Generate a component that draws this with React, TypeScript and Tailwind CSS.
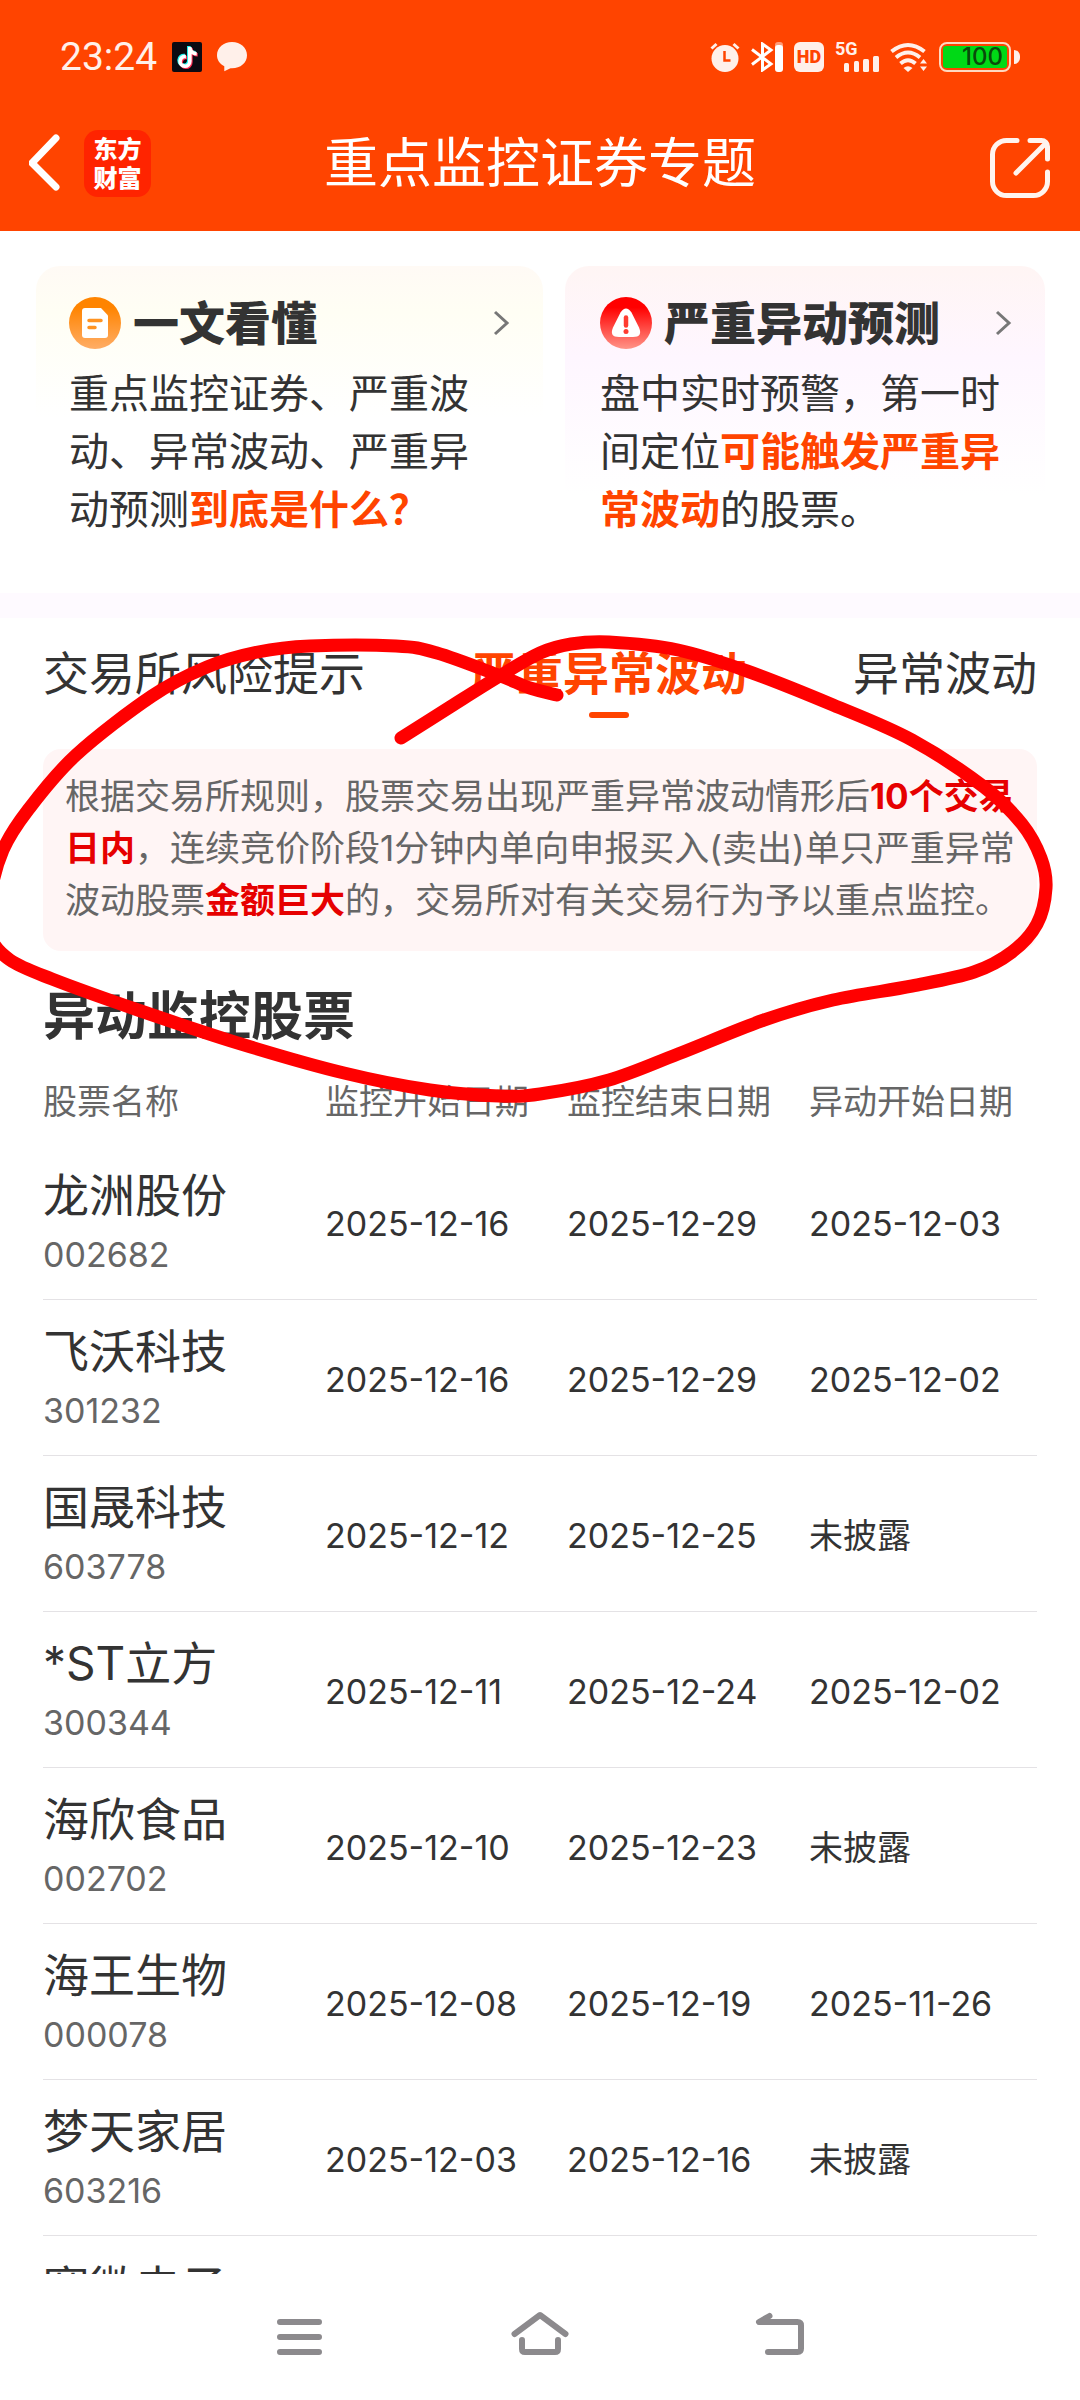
import { FaTiktok } from "react-icons/fa";

interface Stock {
  name: string;
  code: string;
  start: string;
  end: string;
  moved: string;
}

const stocks: Stock[] = [
  { name: "龙洲股份", code: "002682", start: "2025-12-16", end: "2025-12-29", moved: "2025-12-03" },
  { name: "飞沃科技", code: "301232", start: "2025-12-16", end: "2025-12-29", moved: "2025-12-02" },
  { name: "国晟科技", code: "603778", start: "2025-12-12", end: "2025-12-25", moved: "未披露" },
  { name: "*ST立方", code: "300344", start: "2025-12-11", end: "2025-12-24", moved: "2025-12-02" },
  { name: "海欣食品", code: "002702", start: "2025-12-10", end: "2025-12-23", moved: "未披露" },
  { name: "海王生物", code: "000078", start: "2025-12-08", end: "2025-12-19", moved: "2025-11-26" },
  { name: "梦天家居", code: "603216", start: "2025-12-03", end: "2025-12-16", moved: "未披露" },
  { name: "赛微电子", code: "", start: "", end: "", moved: "" },
];

const tabs = ["交易所风险提示", "严重异常波动", "异常波动"];
const activeTab = "严重异常波动";

// Points of the hand-drawn marker line
const marker: [number, number][] = [
  [401, 120], [450, 89], [498, 59], [540, 35], [571, 26], [609, 24], [678, 32], [747, 53],
  [833, 87], [912, 122], [984, 169], [1022, 206], [1041, 240], [1046, 270], [1037, 306],
  [1012, 334], [974, 354], [912, 368], [833, 382], [764, 402], [678, 436], [609, 462],
  [540, 476], [499, 478], [430, 472], [344, 455], [241, 426], [138, 392], [52, 361],
  [10, 342], [-10, 318], [-10, 280], [3, 232], [28, 192], [76, 137], [152, 78], [207, 49],
  [258, 34], [310, 28], [396, 28], [437, 35], [498, 57], [530, 70], [557, 77],
];

function smoothPath(pts: [number, number][]) {
  let d = `M${pts[0][0]} ${pts[0][1]}`;
  for (let i = 0; i < pts.length - 1; i++) {
    const a = pts[i - 1] ?? pts[i];
    const b = pts[i];
    const c = pts[i + 1];
    const e = pts[i + 2] ?? c;
    d += ` C${b[0] + (c[0] - a[0]) / 6} ${b[1] + (c[1] - a[1]) / 6} ${c[0] - (e[0] - b[0]) / 6} ${c[1] - (e[1] - b[1]) / 6} ${c[0]} ${c[1]}`;
  }
  return d;
}

function StatusBar() {
  return (
    <div className="flex h-[114px] items-center justify-between pr-[60px] pl-[60px] text-[#fff0ea]">
      <div className="flex items-center gap-[15px]">
        <span className="font-[Roboto,sans-serif] text-[39px] leading-[40px]">23:24</span>
        <span className="relative h-[30px] w-[30px] rounded-[2px] bg-[#0b0a12]">
          <FaTiktok className="absolute top-[4px] left-[4px] h-[21px] w-[21px] text-[#25f4ee]" />
          <FaTiktok className="absolute top-[6px] left-[6px] h-[21px] w-[21px] text-[#fe2c55]" />
          <FaTiktok className="absolute top-[5px] left-[5px] h-[21px] w-[21px] text-white" />
        </span>
        <svg className="h-[30px] w-[30px]" viewBox="0 0 30 30" fill="currentColor">
          <path d="M15 0C6.500 0 0 5.600 0 13.200c0 4.800 2.800 8.700 7.300 11v5l6.200-3 1.500.1c8.500 0 15-5.600 15-13.100S23.500 0 15 0z" />
        </svg>
      </div>

      <div className="flex items-center gap-[11px]">
        <svg className="h-[30px] w-[30px]" viewBox="0 0 30 30" fill="none">
          <circle cx="15" cy="16.500" r="13.500" fill="currentColor" />
          <path d="M1.500 6.500 6.500 2M23.500 2l5 4.500" stroke="currentColor" strokeWidth="3" />
          <path d="M14.500 9v9.500h6" stroke="#ff4400" strokeWidth="2.500" />
        </svg>
        <svg className="h-[30px] w-[32px]" viewBox="0 0 32 30" fill="none">
          <path d="M1 7.500 20 22l-8.500 6V2L20 8 1 22.500" stroke="white" strokeWidth="3" />
          <rect x="24" y="0" width="8" height="8" rx="3" fill="#ff9c78" />
          <rect x="24" y="3" width="8" height="27" rx="3" fill="white" />
        </svg>
        <span className="flex h-[30px] w-[30px] items-center justify-center rounded-[6px] bg-[#fff0ea] font-[Roboto,sans-serif] text-[18px] leading-none font-black text-[#ff4400]">
          HD
        </span>
        <span className="relative h-[30px] w-[44px]">
          <span className="block font-[Roboto,sans-serif] text-[18px] leading-[14px] font-bold">5G</span>
          <svg className="absolute inset-0" viewBox="0 0 44 30" fill="currentColor">
            <rect x="9" y="21" width="5" height="9" rx="1.500" />
            <rect x="19" y="19" width="5" height="11" rx="1.500" />
            <rect x="28" y="17" width="6" height="13" rx="1.500" />
            <rect x="38" y="14" width="6" height="16" rx="1.500" />
          </svg>
        </span>
        <svg className="h-[30px] w-[38px]" viewBox="0 0 38 30" fill="none">
          <path d="M1.500 9.500q16.500-13 33 0M6 15.500q12-10 24 0M10.500 21.500q7.500-6.500 15 0" stroke="currentColor" strokeWidth="4" />
          <path d="M13.500 26q4.500-3.500 9 0L18 30zM30 21.500l3.500-4.500 3.500 4.500zM30 24.500h7L33.500 29z" fill="currentColor" />
        </svg>
        <div className="flex items-center gap-[3px]">
          <div className="flex h-[30px] w-[72px] rounded-[8px] border-2 border-[#ffd9c0] p-[2px]">
            <span className="flex flex-1 items-center justify-end rounded-[3px] bg-[#00d916] pr-[4px] text-[24px] leading-none font-medium text-[#0a4a0a]">
              100
            </span>
          </div>
          <span className="h-[14px] w-[6px] rounded-r-full bg-[#fff0ea]" />
        </div>
      </div>
    </div>
  );
}

function Header() {
  return (
    <header className="bg-[#ff4400] pb-[18px] text-white">
      <StatusBar />
      <div className="grid h-[99px] grid-cols-[1fr_auto_1fr] items-center px-[29px]">
        <div className="flex items-center gap-[21px]">
          <button aria-label="返回">
            <svg className="h-[60px] w-[34px]" viewBox="0 0 34 60" fill="none">
              <path d="M27 4 3 29l24 24" stroke="white" strokeWidth="7" strokeLinecap="round" strokeLinejoin="round" overflow="visible" />
            </svg>
          </button>
          <span className="flex h-[67px] w-[67px] flex-col items-center justify-center rounded-[14px] bg-[#ff2400] text-[24px] leading-[29px] font-black">
            <span>东方</span>
            <span>财富</span>
          </span>
        </div>
        <h1 className="text-[54px] leading-[60px]">重点监控证券专题</h1>
        <button aria-label="分享" className="justify-self-end">
          <svg className="h-[72px] w-[62px]" viewBox="0 0 62 72" fill="none" stroke="#fff4ee" strokeWidth="5" strokeLinecap="round" strokeLinejoin="round">
            <path d="M28 12.500H17.500a14 14 0 0 0-14 14v27a14 14 0 0 0 14 14h27a14 14 0 0 0 14-14V44" />
            <path d="M41 12.500h11.500a6 6 0 0 1 6 6V31M56 16 27 45" />
          </svg>
        </button>
      </div>
    </header>
  );
}

function Chevron() {
  return (
    <svg className="ml-auto h-[26px] w-[18px]" viewBox="0 0 18 26" fill="none">
      <path d="M3 2l12 11L3 24" stroke="#777" strokeWidth="3" />
    </svg>
  );
}

function IntroCards() {
  return (
    <section className="grid grid-cols-[507fr_480fr] gap-[22px] pt-[35px] pr-[35px] pb-[22px] pl-[36px] text-[#333]">
      <a href="#guide" className="rounded-t-[24px] bg-linear-to-b from-[#fffaf5] via-[#fffef4] via-15% to-white to-50% px-[33px] pt-[31px] pb-8">
        <div className="flex items-center gap-3">
          <svg className="h-[52px] w-[52px]" viewBox="0 0 52 52">
            <defs>
              <linearGradient id="orange" x1="0" y1="0" x2="0" y2="1">
                <stop offset="0.200" stopColor="#ff8400" />
                <stop offset="1" stopColor="#ffad66" />
              </linearGradient>
            </defs>
            <circle cx="26" cy="26" r="26" fill="url(#orange)" />
            <path d="M16 11h16l7 7.500V38a3 3 0 0 1-3 3H16a3 3 0 0 1-3-3V14a3 3 0 0 1 3-3z" fill="white" />
            <path d="M20 23.500h12M20 30.500h6" stroke="#ff9322" strokeWidth="3.500" strokeLinecap="round" />
          </svg>
          <h2 className="text-[46px] leading-[52px] font-black">一文看懂</h2>
          <Chevron />
        </div>
        <p className="mt-4 pr-6 text-[40px] leading-[58px]">
          重点监控证券、严重波动、异常波动、严重异动预测<b className="text-[#ff4400]">到底是什么？</b>
        </p>
      </a>

      <a href="#forecast" className="rounded-t-[24px] bg-linear-to-b from-[#fff5f4] via-[#fef6ff] via-30% to-white to-75% pt-[31px] pr-[33px] pb-8 pl-[35px]">
        <div className="flex items-center gap-3">
          <svg className="h-[52px] w-[52px]" viewBox="0 0 52 52">
            <defs>
              <linearGradient id="red" x1="0" y1="0" x2="0" y2="1">
                <stop offset="0.200" stopColor="#ff0000" />
                <stop offset="1" stopColor="#ff9488" />
              </linearGradient>
            </defs>
            <circle cx="26" cy="26" r="26" fill="url(#red)" />
            <path d="M20.500 15.500q5.500-8 11 0l7.500 15q4 9.500-6 9.500H19q-10 0-6-9.500z" fill="white" />
            <path d="M26 20.500v8" stroke="#ff3b30" strokeWidth="4.500" strokeLinecap="round" />
            <circle cx="26" cy="34.500" r="2.500" fill="#ff3b30" />
          </svg>
          <h2 className="text-[46px] leading-[52px] font-black">严重异动预测</h2>
          <Chevron />
        </div>
        <p className="mt-4 text-[40px] leading-[58px]">
          盘中实时预警，第一时间定位<b className="text-[#ff4400]">可能触发严重异常波动</b>的股票。
        </p>
      </a>
    </section>
  );
}

function StockTable() {
  return (
    <table className="w-full table-fixed text-left">
      <colgroup>
        <col className="w-[282px]" />
        <col className="w-[242px]" />
        <col className="w-[242px]" />
        <col />
      </colgroup>
      <thead>
        <tr className="align-top text-[34px] leading-[40px] whitespace-nowrap text-[#666]">
          <th className="pb-[22px] font-normal">股票名称</th>
          <th className="pb-[22px] font-normal">监控开始日期</th>
          <th className="pb-[22px] font-normal">监控结束日期</th>
          <th className="pb-[22px] font-normal">异动开始日期</th>
        </tr>
      </thead>
      <tbody>
        {stocks.map((stock) => (
          <tr key={stock.name} className="border-b border-[#e4e2e5] text-[34px] text-[#333]">
            <td className="pt-5 pb-[15px]">
              <div className="text-[46px] leading-[62px]">{stock.name}</div>
              <div className="leading-[58px] text-[#666]">{stock.code}</div>
            </td>
            <td className="pt-1">{stock.start}</td>
            <td className="pt-1">{stock.end}</td>
            <td className="pt-1">{stock.moved}</td>
          </tr>
        ))}
      </tbody>
    </table>
  );
}

function MonitorSection() {
  return (
    <section className="relative px-[43px] pt-[27px]">
      <div role="tablist" className="flex items-start justify-between text-[46px] leading-[56px] text-[#333]">
        {tabs.map((tab) =>
          tab === activeTab ? (
            <button key={tab} role="tab" aria-selected="true" className="flex flex-col items-center gap-[11px] font-bold text-[#ff4400]">
              {tab}
              <span className="h-[6px] w-[40px] rounded-[3px] bg-[#ff4400]" />
            </button>
          ) : (
            <button key={tab} role="tab" aria-selected="false">
              {tab}
            </button>
          )
        )}
      </div>

      <p className="mt-[31px] rounded-[18px] bg-[#fff5f5] pt-[21px] pr-[18px] pb-[25px] pl-[22px] text-[35px] leading-[52px] text-[#666]">
        根据交易所规则，股票交易出现严重异常波动情形后<b className="text-[#e60000]">10个交易日内</b>
        ，连续竞价阶段1分钟内单向申报买入(卖出)单只严重异常波动股票<b className="text-[#e60000]">金额巨大</b>
        的，交易所对有关交易行为予以重点监控。
      </p>

      <h2 className="mt-[36px] mb-[35px] text-[52px] leading-[60px] font-bold text-[#333]">异动监控股票</h2>
      <StockTable />

      <svg className="pointer-events-none absolute inset-x-0 top-0 w-full" viewBox="0 0 1080 500" fill="none">
        <path d={smoothPath(marker)} stroke="#ff0000" strokeWidth="13" strokeLinecap="round" strokeLinejoin="round" />
      </svg>
    </section>
  );
}

function SystemNav() {
  return (
    <nav className="flex h-[126px] shrink-0 items-center justify-center gap-[180px] bg-white text-[#8c8a8d]">
      <button aria-label="菜单">
        <svg className="h-[60px] w-[60px]" viewBox="0 0 60 60" fill="none" stroke="currentColor" strokeWidth="6" strokeLinecap="round">
          <path d="M10 15h39M10 30h39M10 45h39" />
        </svg>
      </button>
      <button aria-label="主页">
        <svg className="h-[60px] w-[60px]" viewBox="0 0 60 60" fill="none" stroke="currentColor" strokeWidth="6" strokeLinecap="round" strokeLinejoin="round">
          <path d="M4.500 27 30 8l25.500 19" />
          <path d="M12 33v9q0 3 3 3h30q3 0 3-3v-9" />
        </svg>
      </button>
      <button aria-label="后退">
        <svg className="h-[60px] w-[60px]" viewBox="0 0 60 60" fill="none" stroke="currentColor" strokeWidth="6" strokeLinecap="round" strokeLinejoin="round">
          <path d="M19.500 9 9 15h38.500q3.500 0 3.500 3.500v23q0 3.500-3.500 3.500H18" />
        </svg>
      </button>
    </nav>
  );
}

function App() {
  return (
    <div lang="zh-CN" className="flex h-screen flex-col bg-white font-[Inter,'Noto_Sans_CJK_SC',sans-serif]">
      <Header />
      <main className="flex-1 overflow-hidden">
        <IntroCards />
        <div className="h-[25px] bg-[#fefaff]" />
        <MonitorSection />
      </main>
      <SystemNav />
    </div>
  );
}

export default App;
